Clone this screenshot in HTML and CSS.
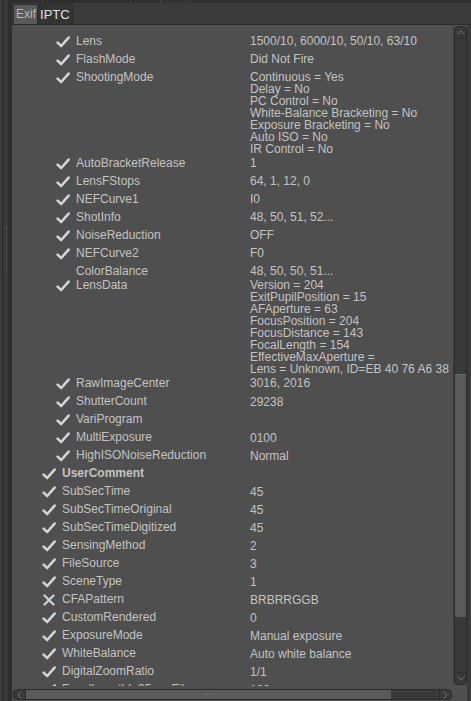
FILE: index.html
```html
<html>

<head>
    <link rel="stylesheet" href="styles.css">
</head>

<body>
    <div class="gutter">
        <div class="grip"></div>
    </div>

    <div class="main">
        <div class="topbar">
            <div class="seg seg-a"></div>
            <div class="seg seg-b"></div>
            <div class="seg seg-c"></div>
            <div class="seg seg-d"></div>
        </div>

        <div class="tabs">
            <div class="tab">Exif</div>
            <div class="tab active">IPTC</div>
        </div>

        <div class="panel">
            <div class="list">
                <div class="rows">
                    <div class="row child">
                        <span class="icon"></span>
                        <span class="key"></span>
                        <span class="value">VR = Yes</span>
                    </div>
                    <div class="row child">
                        <span class="icon check"></span>
                        <span class="key">Lens</span>
                        <span class="value">1500/10, 6000/10, 50/10, 63/10</span>
                    </div>
                    <div class="row child">
                        <span class="icon check"></span>
                        <span class="key">FlashMode</span>
                        <span class="value">Did Not Fire</span>
                    </div>
                    <div class="row child">
                        <span class="icon check"></span>
                        <span class="key">ShootingMode</span>
                        <span class="value">Continuous = Yes<br>Delay = No<br>PC Control = No<br>White-Balance Bracketing = No<br>Exposure Bracketing = No<br>Auto ISO = No<br>IR Control = No</span>
                    </div>
                    <div class="row child">
                        <span class="icon check"></span>
                        <span class="key">AutoBracketRelease</span>
                        <span class="value">1</span>
                    </div>
                    <div class="row child">
                        <span class="icon check"></span>
                        <span class="key">LensFStops</span>
                        <span class="value">64, 1, 12, 0</span>
                    </div>
                    <div class="row child">
                        <span class="icon check"></span>
                        <span class="key">NEFCurve1</span>
                        <span class="value">I0</span>
                    </div>
                    <div class="row child">
                        <span class="icon check"></span>
                        <span class="key">ShotInfo</span>
                        <span class="value">48, 50, 51, 52...</span>
                    </div>
                    <div class="row child">
                        <span class="icon check"></span>
                        <span class="key">NoiseReduction</span>
                        <span class="value">OFF</span>
                    </div>
                    <div class="row child">
                        <span class="icon check"></span>
                        <span class="key">NEFCurve2</span>
                        <span class="value">F0</span>
                    </div>
                    <div class="row child short">
                        <span class="icon"></span>
                        <span class="key">ColorBalance</span>
                        <span class="value">48, 50, 50, 51...</span>
                    </div>
                    <div class="row child">
                        <span class="icon check"></span>
                        <span class="key">LensData</span>
                        <span class="value">Version = 204<br>ExitPupilPosition = 15<br>AFAperture = 63<br>FocusPosition = 204<br>FocusDistance = 143<br>FocalLength = 154<br>EffectiveMaxAperture =<br>Lens = Unknown, ID=EB 40 76 A6 38</span>
                    </div>
                    <div class="row child">
                        <span class="icon check"></span>
                        <span class="key">RawImageCenter</span>
                        <span class="value">3016, 2016</span>
                    </div>
                    <div class="row child">
                        <span class="icon check"></span>
                        <span class="key">ShutterCount</span>
                        <span class="value low">29238</span>
                    </div>
                    <div class="row child">
                        <span class="icon check"></span>
                        <span class="key">VariProgram</span>
                        <span class="value"></span>
                    </div>
                    <div class="row child">
                        <span class="icon check"></span>
                        <span class="key">MultiExposure</span>
                        <span class="value low">0100</span>
                    </div>
                    <div class="row child">
                        <span class="icon check"></span>
                        <span class="key">HighISONoiseReduction</span>
                        <span class="value low">Normal</span>
                    </div>
                    <div class="row">
                        <span class="icon check"></span>
                        <span class="key bold">UserComment</span>
                        <span class="value"></span>
                    </div>
                    <div class="row">
                        <span class="icon check"></span>
                        <span class="key">SubSecTime</span>
                        <span class="value low">45</span>
                    </div>
                    <div class="row">
                        <span class="icon check"></span>
                        <span class="key">SubSecTimeOriginal</span>
                        <span class="value low">45</span>
                    </div>
                    <div class="row">
                        <span class="icon check"></span>
                        <span class="key">SubSecTimeDigitized</span>
                        <span class="value low">45</span>
                    </div>
                    <div class="row">
                        <span class="icon check"></span>
                        <span class="key">SensingMethod</span>
                        <span class="value low">2</span>
                    </div>
                    <div class="row">
                        <span class="icon check"></span>
                        <span class="key">FileSource</span>
                        <span class="value low">3</span>
                    </div>
                    <div class="row">
                        <span class="icon check"></span>
                        <span class="key">SceneType</span>
                        <span class="value low">1</span>
                    </div>
                    <div class="row">
                        <span class="icon cross"></span>
                        <span class="key">CFAPattern</span>
                        <span class="value low">BRBRRGGB</span>
                    </div>
                    <div class="row">
                        <span class="icon check"></span>
                        <span class="key">CustomRendered</span>
                        <span class="value low">0</span>
                    </div>
                    <div class="row">
                        <span class="icon check"></span>
                        <span class="key">ExposureMode</span>
                        <span class="value low">Manual exposure</span>
                    </div>
                    <div class="row">
                        <span class="icon check"></span>
                        <span class="key">WhiteBalance</span>
                        <span class="value low">Auto white balance</span>
                    </div>
                    <div class="row">
                        <span class="icon check"></span>
                        <span class="key">DigitalZoomRatio</span>
                        <span class="value low">1/1</span>
                    </div>
                    <div class="row">
                        <span class="icon check"></span>
                        <span class="key">FocalLengthIn35mmFilm</span>
                        <span class="value low">100</span>
                    </div>
                </div>
            </div>

            <div class="vscroll">
                <div class="arrow">
                    <svg width="8" height="5" viewBox="0 0 8 5"><polyline points="0.5,4.5 4,1 7.5,4.5" /></svg>
                </div>
                <div class="vtrack">
                    <div class="vthumb"></div>
                </div>
                <div class="arrow">
                    <svg width="8" height="5" viewBox="0 0 8 5"><polyline points="0.5,0.5 4,4 7.5,0.5" /></svg>
                </div>
            </div>

            <div class="edge"></div>

            <div class="hscroll">
                <div class="arrow">
                    <svg width="5" height="8" viewBox="0 0 5 8"><polyline points="4.5,0.5 1,4 4.5,7.5" /></svg>
                </div>
                <div class="hthumb">
                    <span class="dots"></span>
                </div>
                <div class="htrack"></div>
                <div class="arrow">
                    <svg width="5" height="8" viewBox="0 0 5 8"><polyline points="0.5,0.5 4,4 0.5,7.5" /></svg>
                </div>
            </div>
        </div>
    </div>

    <script>
        // status icons are the same two glyphs over and over, so stamp them in
        var checkSvg = '<svg width="14" height="12" viewBox="0 0 14 12"><polyline points="1.6,6.6 5.2,10 12.6,1.6" /></svg>';
        var crossSvg = '<svg width="14" height="12" viewBox="0 0 14 12"><line x1="2.5" y1="1.5" x2="11.5" y2="10.5" /><line x1="11.5" y1="1.5" x2="2.5" y2="10.5" /></svg>';

        for (var el of document.querySelectorAll(".icon.check")) {
            el.innerHTML = checkSvg;
        }
        for (var el of document.querySelectorAll(".icon.cross")) {
            el.innerHTML = crossSvg;
        }
    </script>
</body>

</html>
```

FILE: styles.css
```css
body {
    margin: 0;
    width: 471px;
    height: 701px;
    overflow: hidden;
    display: flex;
    background-color: #3b3b3b;
    font-family: 'Liberation Sans', Arial, sans-serif;
    font-size: 12px;
    color: #c3c3c3;
}

/* left splitter strip */
.gutter {
    width: 12px;
    flex: 0 0 12px;
    background: linear-gradient(to right,
        #3b3b3b 0, #3b3b3b 2px,
        #2b2b2b 2px, #2b2b2b 3px,
        #383838 3px, #383838 8px,
        #2e2e2e 8px, #2e2e2e 12px);
}

.grip {
    margin-top: 227px;
    margin-left: 6px;
    width: 0;
    height: 46px;
    border-left: 1px dotted #5c5c5c;
}

.main {
    flex: 1;
    display: flex;
    flex-direction: column;
    min-width: 0;
}

.topbar {
    height: 3px;
    display: flex;
    background-color: #2f2f2f;
}

.seg {
    height: 3px;
    border-right: 1px solid #474747;
}

.seg-a {
    width: 30px;
}

.seg-b {
    width: 87px;
}

.seg-c {
    width: 29px;
}

.seg-d {
    width: 29px;
    background-color: #333;
}

.tabs {
    height: 21px;
    display: flex;
    align-items: flex-end;
    padding-left: 1px;
}

.tab {
    height: 19px;
    line-height: 19px;
    padding: 0 1px 0 2px;
    background-color: #5a5a5a;
    border: 1px solid #2d2d2d;
    border-bottom: none;
    border-radius: 2px 2px 0 0;
    color: #b9b9b9;
    font-size: 12px;
}

.tab.active {
    height: 20px;
    line-height: 21px;
    background-color: #343434;
    color: #e2e2e2;
    font-size: 13px;
    padding: 0 2px 0 2px;
    border-left: none;
    border-radius: 0 3px 0 0;
}

.panel {
    flex: 1;
    min-height: 0;
    border-top: 1px solid #2b2b2b;
    background-color: #4f4f4f;
    display: grid;
    grid-template-columns: 1fr 13px 4px;
    grid-template-rows: 1fr 15px;
}

.list {
    overflow: hidden;
    margin-top: 2px;
    border-right: 1px solid #3f3f3f;
}

.rows {
    margin-top: -12px;
}

.row {
    display: flex;
    align-items: flex-start;
    min-height: 18px;
    padding-left: 30px;
    white-space: nowrap;
    line-height: 12px;
}

.row.child {
    padding-left: 44px;
}

.row.short {
    min-height: 14px;
}

.icon {
    flex: 0 0 20px;
    height: 18px;
    display: flex;
    align-items: flex-start;
    padding-top: 3px;
    box-sizing: border-box;
}

.row.short .icon {
    height: 14px;
}

.icon svg polyline,
.icon svg line {
    fill: none;
    stroke: #d4d4d4;
    stroke-width: 2.6;
    stroke-linecap: round;
    stroke-linejoin: round;
}

.icon.cross svg line {
    stroke-width: 2.2;
}

.key {
    padding-top: 2px;
    flex: 0 0 auto;
    width: 174px;
}

.row:not(.child) .key {
    width: 188px;
}

.key.bold {
    font-weight: bold;
}

.value {
    padding-top: 2px;
}

.value.low {
    padding-top: 3px;
}

/* vertical scrollbar */
.vscroll {
    margin-top: 1px;
    margin-bottom: 1px;
    display: flex;
    flex-direction: column;
    background-color: #393939;
    border: 1px solid #2a2a2a;
    border-radius: 4px;
}

.arrow {
    flex: 0 0 11px;
    display: flex;
    align-items: center;
    justify-content: center;
}

.arrow svg polyline {
    fill: none;
    stroke: #6e6e6e;
    stroke-width: 1;
}

.vscroll .arrow:first-child {
    border-bottom: 1px solid #2d2d2d;
}

.vscroll .arrow:last-child {
    border-top: 1px solid #2d2d2d;
}

.vtrack {
    flex: 1;
}

.vthumb {
    margin-top: 335px;
    height: 242px;
    background-color: #5b5b5b;
    border-top: 1px solid #666;
}

.edge {
    grid-row: 1 / 3;
    grid-column: 3;
    background-color: #3a3a3a;
}

/* horizontal scrollbar */
.hscroll {
    grid-column: 1 / 3;
    margin: 3px 15px 1px 1px;
    display: flex;
    background-color: #3a3a3a;
    border: 1px solid #2a2a2a;
    border-radius: 4px;
}

.hscroll .arrow {
    flex: 0 0 11px;
}

.hscroll .arrow:first-child {
    border-right: 1px solid #2d2d2d;
}

.hscroll .arrow:last-child {
    border-left: 1px solid #2d2d2d;
}

.hthumb {
    width: 365px;
    background-color: #5a5a5a;
    display: flex;
    align-items: center;
    justify-content: center;
}

.dots {
    width: 7px;
    height: 1px;
    border-top: 1px dotted #808080;
}

.htrack {
    flex: 1;
}
```
